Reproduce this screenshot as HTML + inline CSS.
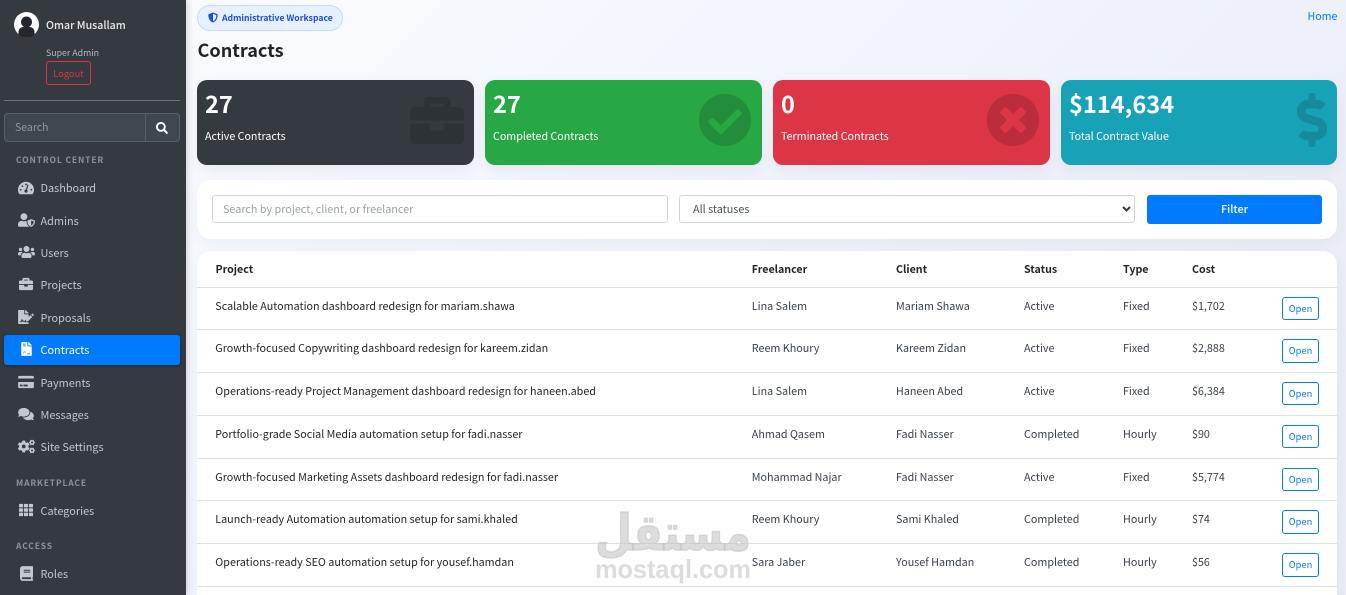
<!DOCTYPE html>
<html lang="en"><head><meta charset="utf-8"><title>Contracts</title>
<style>
*{box-sizing:border-box;margin:0;padding:0}
html,body{width:1346px;height:595px;overflow:hidden}
body{position:relative;font-family:"Noto Sans CJK SC","Liberation Sans",sans-serif;font-size:10.8px;color:#212529;background:linear-gradient(135deg,#fbfcff 0%,#f4f7fe 35%,#eceff7 75%,#e9ecf4 100%)}
.a,.t,svg{position:absolute}
.t{white-space:nowrap;line-height:16px;height:16px}
#side{position:absolute;left:0;top:0;width:186px;height:595px;background:#343a40;box-shadow:2px 0 6px rgba(0,0,0,.14)}
.n{left:40.5px;color:#c2c7d0;font-size:10.9px}
.h{left:16px;color:#8a929a;font-size:8.5px;font-weight:700;letter-spacing:.85px}
.i{fill:#c2c7d0}
.card{position:absolute;top:80px;height:85px;border-radius:10px;box-shadow:0 6px 14px rgba(50,60,90,.07)}
.num{position:absolute;left:8px;top:5px;color:#fff;font-size:23.6px;font-weight:700;line-height:36px;white-space:nowrap}
.lb{position:absolute;left:8px;top:48px;margin-top:.5px;color:#fff;font-size:10.7px;line-height:16px;white-space:nowrap}
.panel{position:absolute;left:197px;width:1140px;background:#fff;border-radius:14px;box-shadow:0 6px 16px rgba(50,60,90,.05)}
.ln{position:absolute;left:197px;width:1140px;height:1px;background:#dee2e6}
.c{font-size:10.75px;color:#3a4149;margin-top:.6px}
.th{font-size:10.65px;font-weight:700;color:#212529;top:261px;margin-top:.6px}
.o{position:absolute;left:1282px;width:37px;border:1px solid #007bff;border-radius:3px;background:#fff;color:#007bff;font-size:9.3px;text-align:center}
</style></head><body>

<div id="side">
<svg style="left:14px;top:12px" width="25" height="25" viewBox="0 0 25 25"><circle cx="12.5" cy="12.500" r="12.500" fill="#fff"/><circle cx="12.500" cy="10" r="5.500" fill="#23272b"/><path fill="#23272b" d="M4.500 22.500v-2.500c0-2.800 2.200-5 5-5h6c2.800 0 5 2.200 5 5v2.500a12 12 0 0 1-16 0z"/></svg>
<div class="t" style="left:46px;top:17.600px;color:#e8eaed;font-size:10.600px;font-weight:500">Omar Musallam</div>
<div class="t" style="left:46px;top:44.500px;color:#b4bac2;font-size:8.800px">Super Admin</div>
<div class="a" style="left:46px;top:61px;width:45px;height:24px;border:1px solid #dc3545;border-radius:3px;color:#dc3545;font-size:9.300px;line-height:22px;text-align:center">Logout</div>
<div class="a" style="left:4px;top:100px;width:176px;height:1px;background:#6c757d"></div>
<div class="a" style="left:4px;top:113px;width:142px;height:29px;background:#3f474e;border:1px solid #56606a;border-radius:4px 0 0 4px;color:#8f979f;font-size:10.500px;line-height:28px;padding-left:10px">Search</div>
<div class="a" style="left:145px;top:113px;width:35px;height:29px;background:#3f474e;border:1px solid #56606a;border-radius:0 4px 4px 0"></div>
<svg style="left:156px;top:122px" width="12" height="12" viewBox="0 0 512 512"><path fill="#fff" d="M505 442.700L405.300 343c-4.500-4.500-10.600-7-17-7H372c27.600-35.300 44-79.700 44-128C416 93.100 322.900 0 208 0S0 93.100 0 208s93.100 208 208 208c48.300 0 92.700-16.400 128-44v16.300c0 6.400 2.500 12.500 7 17l99.700 99.700c9.400 9.400 24.600 9.400 33.900 0l28.300-28.300c9.400-9.400 9.400-24.600.1-34zM208 336c-70.700 0-128-57.200-128-128 0-70.700 57.200-128 128-128 70.700 0 128 57.200 128 128 0 70.700-57.200 128-128 128z"/></svg>
<div class="t h" style="top:152px">CONTROL CENTER</div>

<svg style="left:18px;top:180px" width="16" height="16" viewBox="0 0 576 512"><path class="i" d="M288 32C129 32 0 161 0 320c0 53 14 102 39 145 6 10 16 15 27 15h444c11 0 22-5 27-15 25-43 39-92 39-145 0-159-129-288-288-288z"/><g fill="#343a40"><circle cx="288" cy="128" r="32"/><circle cx="160" cy="192" r="32"/><circle cx="96" cy="320" r="32"/><circle cx="480" cy="320" r="32"/><circle cx="288" cy="368" r="56"/><path d="M340 130l40 12-64 210-40-12z"/></g></svg>
<div class="t n" style="top:180px">Dashboard</div>
<svg style="left:18px;top:213px" width="17" height="14" viewBox="0 0 640 512"><path class="i" d="M622.300 271.100l-115.200-45c-4.100-1.600-12.600-3.700-22.200 0l-115.200 45c-10.700 4.200-17.700 14-17.700 24.900 0 111.600 68.700 188.800 132.900 213.900 9.600 3.700 18 1.600 22.200 0C558.400 489.900 640 420.500 640 296c0-10.900-7-20.700-17.700-24.900zM496 462.400V273.500l95.500 37.300c-5.600 87.100-60.900 135.400-95.500 151.600zM224 256c70.700 0 128-57.300 128-128S294.700 0 224 0 96 57.300 96 128s57.300 128 128 128zm96 40c0-2.500.8-4.800 1.100-7.200-2.500-.1-4.900-.8-7.500-.8h-16.700c-22.200 10.200-46.900 16-72.900 16s-50.600-5.800-72.900-16h-16.700C60.200 288 0 348.200 0 422.400V464c0 26.500 21.500 48 48 48h352c6.800 0 13.300-1.500 19.200-4-54-42.900-99.200-116.700-99.200-208z"/></svg>
<div class="t n" style="top:213px">Admins</div>
<svg style="left:18px;top:245px" width="17" height="14" viewBox="0 0 640 512"><path class="i" d="M96 224c35.300 0 64-28.700 64-64s-28.700-64-64-64-64 28.700-64 64 28.700 64 64 64zm448 0c35.300 0 64-28.700 64-64s-28.700-64-64-64-64 28.700-64 64 28.700 64 64 64zm32 32h-64c-17.600 0-33.500 7.100-45.100 18.600 40.300 22.100 68.900 62 75.100 109.400h66c17.700 0 32-14.300 32-32v-32c0-35.300-28.700-64-64-64zm-256 0c61.900 0 112-50.100 112-112S381.900 32 320 32 208 82.100 208 144s50.100 112 112 112zm76.800 32h-8.300c-20.800 10-43.900 16-68.500 16s-47.600-6-68.500-16h-8.300C179.600 288 128 339.600 128 403.200V432c0 26.500 21.500 48 48 48h288c26.500 0 48-21.500 48-48v-28.800c0-63.600-51.600-115.200-115.200-115.200zm-223.700-13.400C161.500 263.100 145.600 256 128 256H64c-35.300 0-64 28.700-64 64v32c0 17.700 14.300 32 32 32h65.900c6.300-47.400 34.900-87.300 75.200-109.400z"/></svg>
<div class="t n" style="top:245px">Users</div>
<svg style="left:19px;top:277px" width="14" height="14" viewBox="0 0 512 512"><path class="i" d="M320 336c0 8.840-7.160 16-16 16h-96c-8.840 0-16-7.160-16-16v-48H0v144c0 25.600 22.400 48 48 48h416c25.600 0 48-22.400 48-48V288H320v48zm144-208h-80V80c0-25.600-22.400-48-48-48H176c-25.600 0-48 22.400-48 48v48H48c-25.600 0-48 22.400-48 48v80h512v-80c0-25.600-22.400-48-48-48zm-144 0H192V96h128v32z"/></svg>
<div class="t n" style="top:277px">Projects</div>
<svg style="left:18px;top:310px" width="16" height="14" viewBox="0 0 576 512"><path class="i" d="M218.170 424.140c-2.950-5.920-8.090-6.520-10.170-6.520s-7.220.59-10.020 6.190l-7.670 15.340c-6.370 12.780-25.030 11.370-29.480-2.090L144 386.590l-10.610 31.880c-5.890 17.660-22.380 29.530-41 29.530H80c-8.840 0-16-7.160-16-16s7.160-16 16-16h12.390c4.830 0 9.110-3.080 10.640-7.660l18.190-54.640c3.300-9.810 12.440-16.420 22.780-16.420s19.480 6.610 22.770 16.420l13.880 41.640c19.770-16.190 54.050-9.700 66 14.160 2.020 4.060 5.960 6.500 10.290 6.500H256V377.500l128-127.060V160H248c-13.200 0-24-10.800-24-24V0H24C10.700 0 0 10.700 0 24v464c0 13.300 10.700 24 24 24h336c13.300 0 24-10.700 24-24v-40l-128-.11c-16.120-.31-30.580-9.280-37.830-23.750zM384 121.900c0-6.300-2.500-12.400-7-16.900L279.100 7c-4.500-4.500-10.600-7-17-7H256v128h128v-6.100zm-96 225.060V416h68.990l161.680-162.780-67.880-67.880L288 346.960zm280.540-179.630l-31.870-31.870c-9.940-9.940-26.070-9.940-36.010 0l-27.250 27.250 67.880 67.880 27.250-27.250c9.950-9.940 9.950-26.070 0-36.010z"/></svg>
<div class="t n" style="top:310px">Proposals</div>

<div class="a" style="left:4px;top:335px;width:176px;height:30px;background:#007bff;border-radius:3px;box-shadow:0 1px 3px rgba(0,0,0,.3)"></div>
<svg style="left:21px;top:342px" width="11" height="14" viewBox="0 0 384 512"><path fill="#fff" d="M224 136V0H24C10.700 0 0 10.700 0 24v464c0 13.300 10.700 24 24 24h336c13.300 0 24-10.700 24-24V160H248c-13.200 0-24-10.800-24-24zM64 72c0-4.420 3.580-8 8-8h80c4.420 0 8 3.580 8 8v16c0 4.420-3.580 8-8 8H72c-4.420 0-8-3.580-8-8V72zm0 64c0-4.420 3.580-8 8-8h80c4.420 0 8 3.580 8 8v16c0 4.420-3.580 8-8 8H72c-4.420 0-8-3.580-8-8v-16zm256 304c0 4.420-3.580 8-8 8h-80c-4.420 0-8-3.580-8-8v-16c0-4.420 3.580-8 8-8h80c4.420 0 8 3.580 8 8v16zM377 105L279.100 7c-4.500-4.500-10.600-7-17-7H256v128h128v-6.100c0-6.300-2.500-12.400-7-16.900z"/><path d="M70 400l40-60 30 45 30-20" stroke="#007bff" stroke-width="18" fill="none"/></svg>
<div class="t n" style="top:342px;color:#fff">Contracts</div>

<svg style="left:18px;top:375px" width="16" height="14" viewBox="0 0 576 512"><path class="i" d="M0 432c0 26.500 21.500 48 48 48h480c26.500 0 48-21.500 48-48V256H0v176zm192-68c0-6.600 5.400-12 12-12h136c6.600 0 12 5.400 12 12v40c0 6.600-5.400 12-12 12H204c-6.600 0-12-5.400-12-12v-40zm-128 0c0-6.600 5.400-12 12-12h72c6.600 0 12 5.400 12 12v40c0 6.600-5.400 12-12 12H76c-6.600 0-12-5.400-12-12v-40zM576 80v48H0V80c0-26.500 21.500-48 48-48h480c26.500 0 48 21.500 48 48z"/></svg>
<div class="t n" style="top:375px">Payments</div>
<svg style="left:18px;top:407px" width="16" height="14" viewBox="0 0 576 512"><path class="i" d="M416 192c0-88.400-93.100-160-208-160S0 103.600 0 192c0 34.300 14.100 65.900 38 92-13.400 30.200-35.500 54.200-35.800 54.500-2.200 2.300-2.800 5.700-1.500 8.700S4.800 352 8 352c36.600 0 66.900-12.300 88.700-25 32.200 15.700 70.300 25 111.300 25 114.900 0 208-71.600 208-160zm122 220c23.900-26 38-57.700 38-92 0-66.900-53.500-124.200-129.300-148.100.9 6.600 1.300 13.300 1.300 20.100 0 105.900-107.700 192-240 192-10.800 0-21.300-.8-31.700-1.900C207.800 439.600 281.800 480 368 480c41 0 79.100-9.200 111.300-25 21.800 12.700 52.100 25 88.700 25 3.200 0 6.100-1.900 7.300-4.800 1.300-2.900.7-6.300-1.500-8.700-.3-.3-22.400-24.200-35.800-54.500z"/></svg>
<div class="t n" style="top:407px">Messages</div>
<svg style="left:18px;top:439px" width="17" height="15" viewBox="0 0 640 512"><path class="i" d="M512.100 191l-8.200 14.300c-3 5.300-9.400 7.500-15.100 5.400-11.800-4.400-22.600-10.700-32.100-18.600-4.600-3.800-5.800-10.500-2.800-15.700l8.200-14.300c-6.900-8-12.300-17.300-15.900-27.400h-16.500c-6 0-11.200-4.300-12.200-10.300-2-12-2.100-24.600 0-37.100 1-6 6.200-10.400 12.200-10.400h16.500c3.600-10.100 9-19.400 15.900-27.400l-8.200-14.300c-3-5.200-1.900-11.900 2.800-15.700 9.500-7.900 20.400-14.200 32.100-18.600 5.700-2.100 12.100.1 15.100 5.400l8.200 14.300c10.500-1.900 21.200-1.900 31.700 0L552 6.300c3-5.300 9.400-7.500 15.100-5.400 11.800 4.400 22.600 10.700 32.100 18.600 4.600 3.800 5.800 10.500 2.800 15.700l-8.200 14.300c6.900 8 12.300 17.300 15.900 27.400h16.500c6 0 11.200 4.300 12.200 10.300 2 12 2.100 24.600 0 37.100-1 6-6.200 10.400-12.200 10.400h-16.500c-3.600 10.100-9 19.400-15.900 27.400l8.200 14.300c3 5.200 1.900 11.900-2.800 15.700-9.500 7.900-20.400 14.200-32.100 18.600-5.700 2.100-12.100-.1-15.100-5.400l-8.200-14.300c-10.400 1.900-21.200 1.900-31.700 0zm-10.500-58.800c38.500 29.600 82.400-14.300 52.800-52.800-38.500-29.700-82.400 14.300-52.800 52.800zM386.300 286.100l33.700 16.800c10.100 5.800 14.500 18.100 10.500 29.100-8.900 24.200-26.400 46.400-42.600 65.800-7.400 8.900-20.200 11.100-30.300 5.300l-29.100-16.800c-16 13.700-34.600 24.600-54.900 31.700v33.600c0 11.600-8.300 21.600-19.700 23.600-24.600 4.200-50.400 4.400-75.900 0-11.500-2-20-11.900-20-23.600V418c-20.300-7.200-38.900-18-54.900-31.700L74 403c-10 5.800-22.900 3.600-30.300-5.300-16.200-19.400-33.300-41.600-42.200-65.700-4-10.900.4-23.200 10.500-29.100l33.300-16.800c-3.900-20.900-3.900-42.400 0-63.400L12 205.800c-10.100-5.800-14.600-18.100-10.500-29 8.900-24.200 26-46.400 42.200-65.800 7.400-8.900 20.200-11.100 30.300-5.300l29.100 16.800c16-13.700 34.600-24.600 54.900-31.700V57.100c0-11.500 8.200-21.500 19.600-23.500 24.600-4.200 50.500-4.400 76-.1 11.500 2 20 11.900 20 23.600v33.600c20.300 7.200 38.900 18 54.900 31.700l29.100-16.800c10-5.800 22.900-3.600 30.300 5.300 16.200 19.400 33.200 41.600 42.100 65.800 4 10.900.1 23.200-10 29.100l-33.700 16.800c3.900 21 3.900 42.500 0 63.500zm-117.600 21.100c59.200-77-28.700-164.900-105.700-105.700-59.200 77 28.700 164.900 105.700 105.700zm243.400 182.700l-8.200 14.300c-3 5.300-9.400 7.500-15.100 5.400-11.800-4.400-22.600-10.700-32.100-18.600-4.600-3.800-5.800-10.500-2.800-15.700l8.200-14.300c-6.900-8-12.300-17.300-15.900-27.400h-16.500c-6 0-11.200-4.300-12.200-10.300-2-12-2.100-24.600 0-37.100 1-6 6.200-10.400 12.200-10.400h16.500c3.600-10.100 9-19.400 15.900-27.400l-8.200-14.300c-3-5.200-1.900-11.900 2.800-15.700 9.500-7.900 20.400-14.200 32.100-18.600 5.700-2.100 12.100.1 15.100 5.400l8.200 14.300c10.500-1.900 21.200-1.900 31.700 0l8.200-14.300c3-5.300 9.400-7.500 15.100-5.400 11.800 4.400 22.600 10.700 32.100 18.600 4.600 3.800 5.800 10.500 2.800 15.700l-8.200 14.300c6.900 8 12.300 17.300 15.900 27.400h16.500c6 0 11.200 4.300 12.200 10.300 2 12 2.100 24.600 0 37.100-1 6-6.200 10.400-12.200 10.400h-16.500c-3.600 10.100-9 19.400-15.900 27.400l8.200 14.300c3 5.200 1.900 11.900-2.800 15.700-9.500 7.900-20.400 14.200-32.100 18.600-5.700 2.100-12.100-.1-15.100-5.400l-8.200-14.300c-10.400 1.900-21.200 1.900-31.700 0zM501.600 431c38.500 29.600 82.400-14.300 52.800-52.800-38.500-29.600-82.400 14.300-52.800 52.800z"/></svg>
<div class="t n" style="top:439px">Site Settings</div>
<div class="t h" style="top:475px">MARKETPLACE</div>
<svg style="left:19px;top:503px" width="14" height="14" viewBox="0 0 512 512"><path class="i" d="M149.333 56v80c0 13.255-10.745 24-24 24H24c-13.255 0-24-10.745-24-24V56c0-13.255 10.745-24 24-24h101.333c13.255 0 24 10.745 24 24zm181.334 240v-80c0-13.255-10.745-24-24-24H205.333c-13.255 0-24 10.745-24 24v80c0 13.255 10.745 24 24 24h101.333c13.256 0 24.001-10.745 24.001-24zm32-240v80c0 13.255 10.745 24 24 24H488c13.255 0 24-10.745 24-24V56c0-13.255-10.745-24-24-24H386.667c-13.255 0-24 10.745-24 24zm-32 80V56c0-13.255-10.745-24-24-24H205.333c-13.255 0-24 10.745-24 24v80c0 13.255 10.745 24 24 24h101.333c13.256 0 24.001-10.745 24.001-24zm-205.334 56H24c-13.255 0-24 10.745-24 24v80c0 13.255 10.745 24 24 24h101.333c13.255 0 24-10.745 24-24v-80c0-13.255-10.745-24-24-24zM0 376v80c0 13.255 10.745 24 24 24h101.333c13.255 0 24-10.745 24-24v-80c0-13.255-10.745-24-24-24H24c-13.255 0-24 10.745-24 24zm386.667-56H488c13.255 0 24-10.745 24-24v-80c0-13.255-10.745-24-24-24H386.667c-13.255 0-24 10.745-24 24v80c0 13.255 10.745 24 24 24zm0 160H488c13.255 0 24-10.745 24-24v-80c0-13.255-10.745-24-24-24H386.667c-13.255 0-24 10.745-24 24v80c0 13.255 10.745 24 24 24zM181.333 376v80c0 13.255 10.745 24 24 24h101.333c13.255 0 24-10.745 24-24v-80c0-13.255-10.745-24-24-24H205.333c-13.255 0-24 10.745-24 24z"/></svg>
<div class="t n" style="top:503px">Categories</div>
<div class="t h" style="top:538px">ACCESS</div>
<svg style="left:20px;top:566px" width="13" height="15" viewBox="0 0 448 512"><path class="i" d="M448 360V24c0-13.300-10.700-24-24-24H96C43 0 0 43 0 96v320c0 53 43 96 96 96h328c13.300 0 24-10.700 24-24v-16c0-7.500-3.500-14.300-8.900-18.700-4.200-15.400-4.200-59.300 0-74.700 5.400-4.300 8.900-11.100 8.900-18.600zM128 134c0-3.300 2.700-6 6-6h212c3.300 0 6 2.700 6 6v20c0 3.300-2.700 6-6 6H134c-3.300 0-6-2.700-6-6v-20zm0 64c0-3.300 2.700-6 6-6h212c3.300 0 6 2.700 6 6v20c0 3.300-2.700 6-6 6H134c-3.300 0-6-2.700-6-6v-20zm253.400 250H96c-17.700 0-32-14.300-32-32 0-17.600 14.400-32 32-32h285.400c-1.900 17.100-1.900 46.900 0 64z"/></svg>
<div class="t n" style="top:566px">Roles</div>
</div>

<div class="a" style="left:197px;top:5px;width:146px;height:26px;background:#e6f0ff;border:1px solid #c6dcff;border-radius:13px"></div>
<svg style="left:208px;top:12px" width="10" height="11" viewBox="0 0 512 512"><path fill="#1d4ed8" d="M466.500 83.700l-192-80a48.150 48.150 0 0 0-36.900 0l-192 80C27.700 91.100 16 108.600 16 128c0 198.500 114.500 335.700 221.500 380.300 11.800 4.900 25.100 4.900 36.900 0C360.100 472.600 496 349.300 496 128c0-19.400-11.700-36.900-29.500-44.300zM256.100 446.300l-.1-381 175.900 73.300c-3.300 151.400-82.100 261.100-175.800 307.700z"/></svg>
<div class="t" style="left:222px;top:10px;color:#1d4ed8;font-size:8.650px;font-weight:700">Administrative Workspace</div>
<div class="t" style="left:197.500px;top:36px;height:28px;line-height:28px;font-size:18.100px;font-weight:700;color:#1f2429">Contracts</div>
<div class="t" style="left:1307.500px;top:8.500px;color:#007bff;font-size:10.600px">Home</div>

<div class="card" style="left:197px;width:277px;background:#343a40">
<svg style="left:213px;top:17px" width="54" height="47" viewBox="0 0 512 448"><path fill="#2d3237" transform="translate(0,-32)" d="M320 336c0 8.840-7.160 16-16 16h-96c-8.840 0-16-7.160-16-16v-48H0v144c0 25.600 22.400 48 48 48h416c25.600 0 48-22.400 48-48V288H320v48zm144-208h-80V80c0-25.600-22.400-48-48-48H176c-25.600 0-48 22.400-48 48v48H48c-25.600 0-48 22.400-48 48v80h512v-80c0-25.600-22.400-48-48-48zm-144 0H192V96h128v32z"/></svg>
<div class="num">27</div><div class="lb">Active Contracts</div></div>
<div class="card" style="left:485px;width:277px;background:#28a745">
<svg style="left:214px;top:14px" width="52" height="52" viewBox="8 8 496 496"><path fill="#228e3b" d="M504 256c0 136.967-111.033 248-248 248S8 392.967 8 256 119.033 8 256 8s248 111.033 248 248zM227.314 387.314l184-184c6.248-6.248 6.248-16.379 0-22.627l-22.627-22.627c-6.248-6.249-16.379-6.249-22.628 0L216 308.118l-70.059-70.059c-6.248-6.248-16.379-6.248-22.628 0l-22.627 22.627c-6.248 6.248-6.248 16.379 0 22.627l104 104c6.249 6.249 16.379 6.249 22.628.001z"/></svg>
<div class="num">27</div><div class="lb">Completed Contracts</div></div>
<div class="card" style="left:773px;width:277px;background:#dc3545">
<svg style="left:214px;top:14px" width="52" height="52" viewBox="8 8 496 496"><path fill="#bb2d3b" d="M256 8C119 8 8 119 8 256s111 248 248 248 248-111 248-248S393 8 256 8zm121.600 313.100c4.700 4.700 4.700 12.300 0 17L338 377.600c-4.700 4.700-12.300 4.700-17 0L256 312l-65.100 65.600c-4.700 4.700-12.300 4.700-17 0L134.400 338c-4.700-4.700-4.700-12.300 0-17l65.600-65-65.600-65.100c-4.700-4.700-4.700-12.300 0-17l39.600-39.600c4.700-4.700 12.300-4.700 17 0l65 65.700 65.100-65.600c4.700-4.700 12.300-4.700 17 0l39.600 39.600c4.700 4.700 4.700 12.300 0 17L312 256l65.600 65.100z"/></svg>
<div class="num">0</div><div class="lb">Terminated Contracts</div></div>
<div class="card" style="left:1061px;width:276px;background:#17a2b8">
<svg style="left:235px;top:13px" width="32" height="54" viewBox="0 0 288 512"><path fill="#148a9c" d="M209.200 233.400l-108-31.600C88.700 198.200 80 186.500 80 173.500c0-16.300 13.200-29.500 29.500-29.500h66.300c12.200 0 24.200 3.700 34.200 10.500 6.100 4.100 14.300 3.100 19.500-2l34.800-34c7.100-6.900 6.100-18.400-1.800-24.500C238 74.800 207.400 64.100 176 64V16c0-8.800-7.200-16-16-16h-32c-8.800 0-16 7.200-16 16v48h-2.500C45.800 64-5.400 118.700.5 183.600c4.200 46.100 39.400 83.600 83.800 96.600l102.500 30c12.500 3.700 21.200 15.300 21.200 28.300 0 16.300-13.200 29.500-29.500 29.500h-66.300C100 368 88 364.300 78 357.500c-6.100-4.100-14.300-3.100-19.500 2l-34.800 34c-7.100 6.900-6.100 18.400 1.800 24.500 24.500 19.200 55.100 29.900 86.500 30v48c0 8.800 7.200 16 16 16h32c8.800 0 16-7.200 16-16v-48.200c46.600-.9 90.300-28.600 105.700-72.700 21.500-61.600-14.600-124.800-72.500-141.700z"/></svg>
<div class="num">$114,634</div><div class="lb">Total Contract Value</div></div>

<div class="panel" style="top:180px;height:59px"></div>
<div class="a" style="left:212px;top:195px;width:456px;height:28px;border:1px solid #ced4da;border-radius:3px;background:#fff;color:#9aa1a8;font-size:10.800px;line-height:27px;padding-left:10px">Search by project, client, or freelancer</div>
<div class="a" style="left:679px;top:195px;width:456px;height:28px;border:1px solid #ced4da;border-radius:3px;background:#fff;color:#495057;font-size:10.800px;line-height:27px;padding-left:13px">All statuses</div>
<svg style="left:1122px;top:205px" width="9" height="8" viewBox="0 0 9 8"><path d="M1 2l3.500 3.500L8 2" stroke="#343a40" stroke-width="2" fill="none"/></svg>
<div class="a" style="left:1147px;top:195px;width:175px;height:29px;background:#007bff;border-radius:3px;color:#fff;font-size:10.800px;font-weight:500;line-height:29px;text-align:center">Filter</div>

<div class="panel" style="top:251px;height:360px"></div>
<div class="t th" style="left:215.500px">Project</div><div class="t th" style="left:751.800px">Freelancer</div><div class="t th" style="left:896px">Client</div><div class="t th" style="left:1024px">Status</div><div class="t th" style="left:1123px">Type</div><div class="t th" style="left:1192px">Cost</div>
<div class="ln" style="top:287px"></div><div class="ln" style="top:329px"></div><div class="ln" style="top:372px"></div><div class="ln" style="top:415px"></div><div class="ln" style="top:458px"></div><div class="ln" style="top:500px"></div><div class="ln" style="top:543px"></div><div class="ln" style="top:586px"></div>

<div class="t c" style="left:215.300px;top:298px;color:#212529">Scalable Automation dashboard redesign for mariam.shawa</div><div class="t c" style="left:751.800px;top:298px">Lina Salem</div><div class="t c" style="left:896px;top:298px">Mariam Shawa</div><div class="t c" style="left:1024px;top:298px">Active</div><div class="t c" style="left:1123px;top:298px">Fixed</div><div class="t c" style="left:1192px;top:298px">$1,702</div>
<div class="o" style="top:297px;height:23px;line-height:21px">Open</div>
<div class="t c" style="left:215.300px;top:340px;color:#212529">Growth-focused Copywriting dashboard redesign for kareem.zidan</div><div class="t c" style="left:751.800px;top:340px">Reem Khoury</div><div class="t c" style="left:896px;top:340px">Kareem Zidan</div><div class="t c" style="left:1024px;top:340px">Active</div><div class="t c" style="left:1123px;top:340px">Fixed</div><div class="t c" style="left:1192px;top:340px">$2,888</div>
<div class="o" style="top:339px;height:24px;line-height:21px">Open</div>
<div class="t c" style="left:215.300px;top:383px;color:#212529">Operations-ready Project Management dashboard redesign for haneen.abed</div><div class="t c" style="left:751.800px;top:383px">Lina Salem</div><div class="t c" style="left:896px;top:383px">Haneen Abed</div><div class="t c" style="left:1024px;top:383px">Active</div><div class="t c" style="left:1123px;top:383px">Fixed</div><div class="t c" style="left:1192px;top:383px">$6,384</div>
<div class="o" style="top:382px;height:23px;line-height:21px">Open</div>
<div class="t c" style="left:215.300px;top:426px;color:#212529">Portfolio-grade Social Media automation setup for fadi.nasser</div><div class="t c" style="left:751.800px;top:426px">Ahmad Qasem</div><div class="t c" style="left:896px;top:426px">Fadi Nasser</div><div class="t c" style="left:1024px;top:426px">Completed</div><div class="t c" style="left:1123px;top:426px">Hourly</div><div class="t c" style="left:1192px;top:426px">$90</div>
<div class="o" style="top:425px;height:23px;line-height:21px">Open</div>
<div class="t c" style="left:215.300px;top:469px;color:#212529">Growth-focused Marketing Assets dashboard redesign for fadi.nasser</div><div class="t c" style="left:751.800px;top:469px">Mohammad Najar</div><div class="t c" style="left:896px;top:469px">Fadi Nasser</div><div class="t c" style="left:1024px;top:469px">Active</div><div class="t c" style="left:1123px;top:469px">Fixed</div><div class="t c" style="left:1192px;top:469px">$5,774</div>
<div class="o" style="top:468px;height:23px;line-height:21px">Open</div>
<div class="t c" style="left:215.300px;top:511px;color:#212529">Launch-ready Automation automation setup for sami.khaled</div><div class="t c" style="left:751.800px;top:511px">Reem Khoury</div><div class="t c" style="left:896px;top:511px">Sami Khaled</div><div class="t c" style="left:1024px;top:511px">Completed</div><div class="t c" style="left:1123px;top:511px">Hourly</div><div class="t c" style="left:1192px;top:511px">$74</div>
<div class="o" style="top:510px;height:24px;line-height:21px">Open</div>
<div class="t c" style="left:215.300px;top:554px;color:#212529">Operations-ready SEO automation setup for yousef.hamdan</div><div class="t c" style="left:751.800px;top:554px">Sara Jaber</div><div class="t c" style="left:896px;top:554px">Yousef Hamdan</div><div class="t c" style="left:1024px;top:554px">Completed</div><div class="t c" style="left:1123px;top:554px">Hourly</div><div class="t c" style="left:1192px;top:554px">$56</div>
<div class="o" style="top:553px;height:24px;line-height:21px">Open</div>

<svg style="left:590px;top:505px" width="166" height="85" viewBox="0 0 166 85">
<text x="83" y="45" text-anchor="middle" textLength="156" lengthAdjust="spacingAndGlyphs" font-family="DejaVu Sans, sans-serif" font-weight="700" font-size="50" fill="#c4c4c4" fill-opacity=".6" stroke="#c4c4c4" stroke-opacity=".6" stroke-width="1.500">مستقل</text>
<text x="83" y="73" text-anchor="middle" textLength="156" lengthAdjust="spacingAndGlyphs" font-family="Liberation Sans, sans-serif" font-weight="700" font-size="26" fill="#c4c4c4" fill-opacity=".6">mostaql.com</text>
</svg>
</body></html>
